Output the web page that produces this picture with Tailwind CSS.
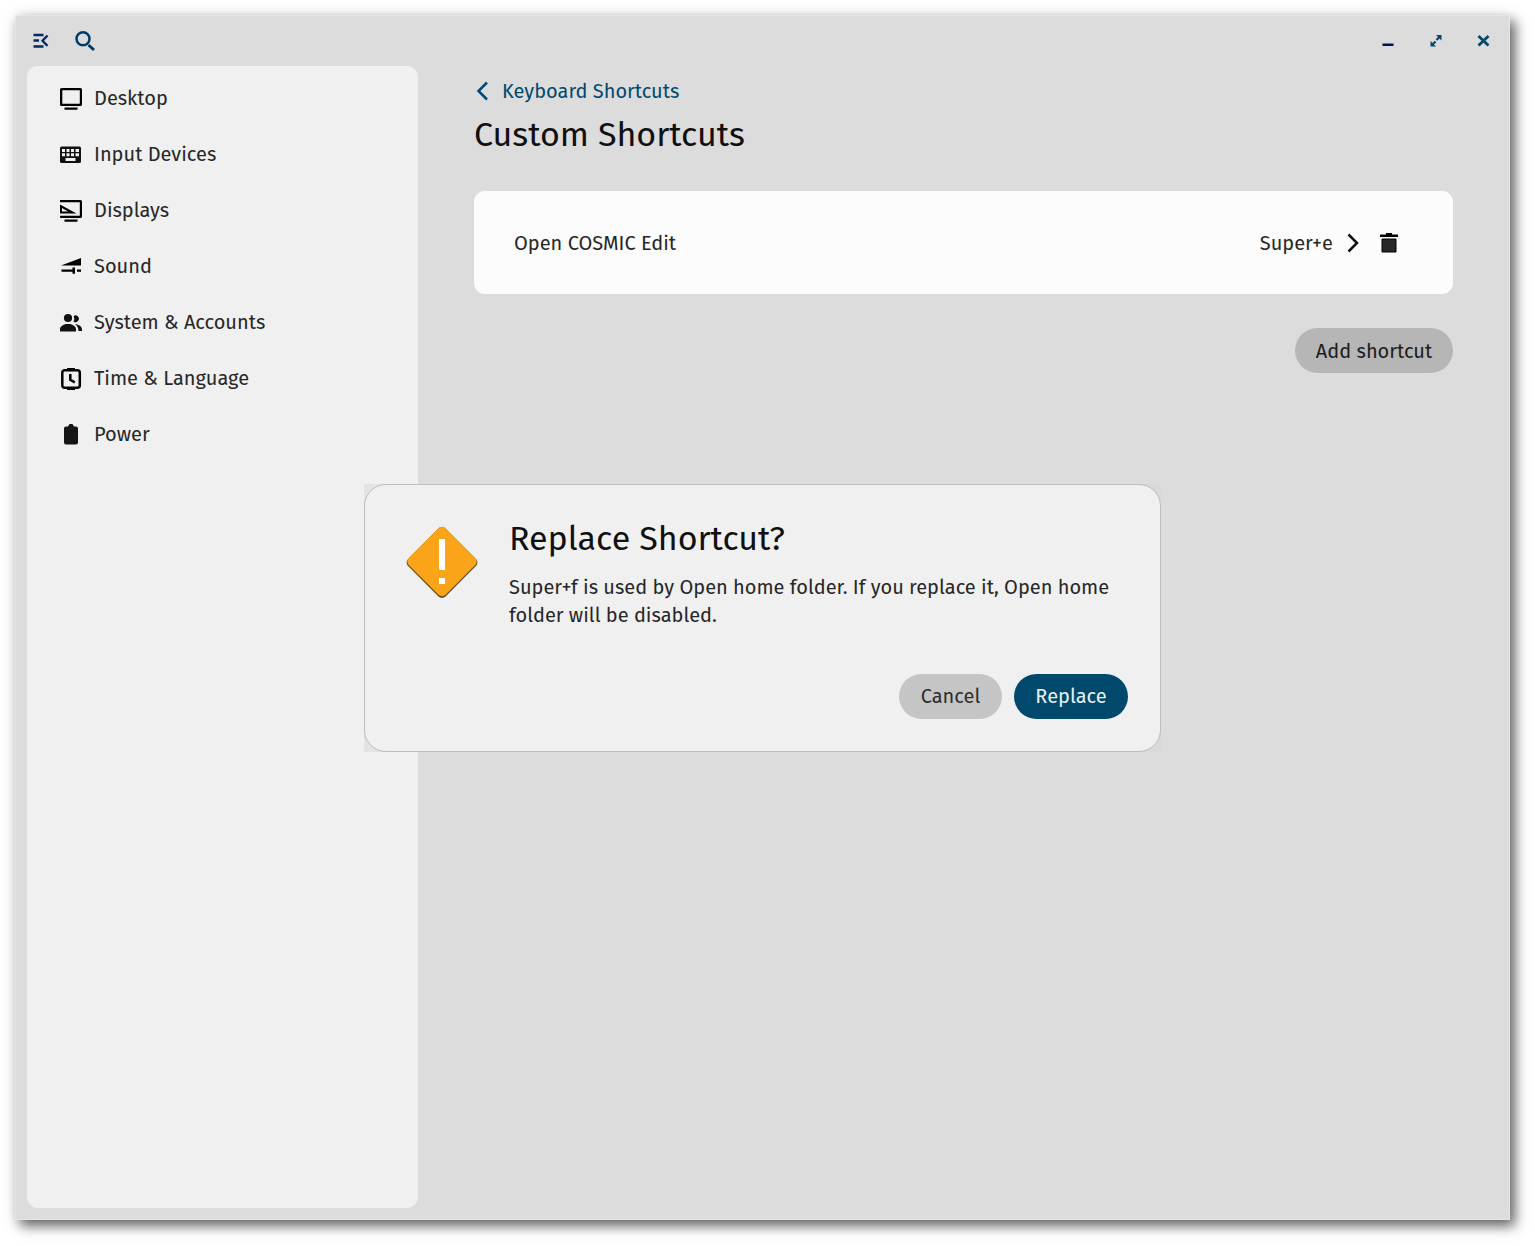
<!DOCTYPE html>
<html lang="en">
<head>
    <meta charset="UTF-8">
    <meta name="viewport" content="width=device-width, initial-scale=1.0">
    <title>Custom Shortcuts</title>
    <script src="https://cdn.jsdelivr.net/npm/@tailwindcss/browser@4"></script>
</head>
<body class="bg-white font-['Fira_Sans','Noto_Sans',sans-serif] text-[20px] leading-7 text-[#272727] min-h-screen flex pt-[15px] pr-[25px] pb-[26px] pl-[15px]">

    <!-- Window -->
    <div class="relative grow flex flex-col bg-[#dcdcdc] border border-[#e6e6e6] shadow-[5px_6px_12px_rgba(0,0,0,0.6),0_0_16px_rgba(0,0,0,0.08)]">

        <header class="h-[50px] shrink-0 flex items-center justify-between pl-3 pr-[13px] text-[#00496d]">
            <div class="flex items-center gap-5">
                <button aria-label="Toggle sidebar" class="w-6 h-6">
                    <svg class="w-6 h-6" viewBox="0 0 24 24" fill="none" stroke="#002a66" stroke-width="2.300"><path d="M5.500 6h10M5.500 11.500h5.500M5.500 17.500h10M19.500 6.500l-5 5.200 5 5.200"/></svg>
                </button>
                <button aria-label="Search" class="w-6 h-6">
                    <svg class="w-6 h-6" viewBox="0 0 24 24" fill="none" stroke="#003c6b" stroke-width="2.500"><circle cx="11" cy="9.800" r="6.500"/><path d="M16.500 16l5.500 5" stroke-width="3"/></svg>
                </button>
            </div>
            <div class="flex items-center gap-6">
                <button aria-label="Minimize" class="w-6 h-6">
                    <svg class="w-6 h-6" viewBox="0 0 24 24"><path d="M6.500 14.500h11V17h-11z" fill="#00115a"/></svg>
                </button>
                <button aria-label="Maximize" class="w-6 h-6">
                    <svg class="w-6 h-6" viewBox="0 0 24 24" fill="#00496d"><path d="M12 6h5.500v5.500l-2-2-2.300 2.300-1.500-1.500L14 8zM6.500 12v5.500H12l-2-2 2.300-2.300-1.500-1.500L8.500 14z"/></svg>
                </button>
                <button aria-label="Close" class="w-6 h-6">
                    <svg class="w-6 h-6" viewBox="0 0 24 24" fill="none" stroke="#00496d" stroke-width="2.800"><path d="M6.500 7l10 9.500M16.500 7l-10 9.500"/></svg>
                </button>
            </div>
        </header>

        <div class="grow flex pl-[11px] pb-[11px]">
            <!-- Sidebar -->
            <nav class="w-[391px] shrink-0 bg-[#f0f0f0] rounded-[11px] pt-1 px-2">
                <ul>
                    <li><a href="#" class="h-14 px-6 flex items-center gap-[11px]">
                        <svg class="w-6 h-6 mt-px" viewBox="0 0 24 24" fill="#000"><path fill-rule="evenodd" d="M2.500 1h19A1.500 1.500 0 0 1 23 2.500v15a1.500 1.500 0 0 1-1.500 1.500h-19A1.500 1.500 0 0 1 1 17.500v-15A1.500 1.500 0 0 1 2.500 1zM3.300 3.200v13.500h17.500V3.200zM5.500 20.500h13v2.300h-13z"/></svg>
                        Desktop</a></li>
                    <li><a href="#" class="h-14 px-6 flex items-center gap-[11px]">
                        <svg class="w-6 h-6 mt-px" viewBox="0 0 24 24" fill="#111"><path fill-rule="evenodd" d="M2.500 3.500h18A1.500 1.500 0 0 1 22 5v13.500a1.500 1.500 0 0 1-1.500 1.500h-18A1.500 1.500 0 0 1 1 18.500V5a1.500 1.500 0 0 1 1.500-1.500zM3 6v3h3V6zM7.500 6v3h3V6zM12 6v3h3V6zM16.500 6v3h3.500V6zM3 10.200v3h3v-3zM7.500 10.200v3h3v-3zM12 10.200v3h3v-3zM16.500 10.200v3h3.500v-3zM6.500 15v3h10v-3z"/></svg>
                        Input Devices</a></li>
                    <li><a href="#" class="h-14 px-6 flex items-center gap-[11px]">
                        <svg class="w-6 h-6 mt-px" viewBox="0 0 24 24" fill="#000"><path d="M1 1h20.500A1.500 1.500 0 0 1 23 2.500v15a1.500 1.500 0 0 1-1.500 1.500H2a1 1 0 0 1-1-1v-1.200h19.800V3.200H1zM5.500 20.500h13v2.300h-13z"/><path fill-rule="evenodd" d="M1 5.500L17.500 14.500H1zM3 9v3.500h6z"/></svg>
                        Displays</a></li>
                    <li><a href="#" class="h-14 px-6 flex items-center gap-[11px]">
                        <svg class="w-6 h-6 mt-px" viewBox="0 0 24 24" fill="#000"><path d="M22 3v7.500H2zM2.500 14.500h11v-2H16v6.300h-2.500v-2h-11zM18 14.500h4v2.300h-4z"/></svg>
                        Sound</a></li>
                    <li><a href="#" class="h-14 px-6 flex items-center gap-[11px]">
                        <svg class="w-6 h-6 mt-px" viewBox="0 0 24 24" fill="#111"><circle cx="9" cy="7" r="4.100"/><path d="M1 20.500v-2.200C1 15 5 13 9 13s8 2 8 5.300v2.200z"/><path d="M14.500 5.200a3.300 3.300 0 1 1 0 5.200c1-1.700 1-3.500 0-5.200zM16 13c4 .6 7 2.500 7 5.500V20h-3.500c0-3-1-5-3.500-7z"/></svg>
                        System &amp; Accounts</a></li>
                    <li><a href="#" class="h-14 px-6 flex items-center gap-[11px]">
                        <svg class="w-6 h-6 mt-px" viewBox="0 0 24 24" fill="none" stroke="#000" stroke-width="2.500"><rect x="3.300" y="3.300" width="17.500" height="17.500" rx="2.500"/><path d="M8 2.200h8M8 21.800h8"/><path d="M11.300 7v5.800l4.500 2.500"/></svg>
                        Time &amp; Language</a></li>
                    <li><a href="#" class="h-14 px-6 flex items-center gap-[11px]">
                        <svg class="w-6 h-6 mt-px" viewBox="0 0 24 24" fill="#151515"><path d="M10.500 1h3L15 3.500h2A2 2 0 0 1 19 5.500v14a2 2 0 0 1-2 2H7a2 2 0 0 1-2-2v-14a2 2 0 0 1 2-2h2z"/></svg>
                        Power</a></li>
                </ul>
            </nav>

            <!-- Content -->
            <main class="grow px-14 pt-[11px]">
                <a href="#" class="flex w-fit items-center gap-1 text-[#00496d]">
                    <svg class="w-6 h-6" viewBox="0 0 24 24" fill="none" stroke="#004a78" stroke-width="2.500"><path d="M13 3.500L4.500 12l8.500 8.500"/></svg>
                    Keyboard Shortcuts
                </a>
                <h1 class="text-[34px] leading-10 mt-[10px] text-[#101010]">Custom Shortcuts</h1>

                <div class="mt-9 h-[103px] bg-[#fcfcfc] rounded-[11px] flex items-center justify-between pl-10 pr-[52px]">
                    <span>Open COSMIC Edit</span>
                    <div class="flex items-center gap-3">
                        <button class="flex items-center gap-2">
                            Super+e
                            <svg class="w-6 h-6" viewBox="0 0 24 24" fill="none" stroke="#111" stroke-width="2.500"><path d="M7.500 3.500l8.500 8.500-8.500 8.500"/></svg>
                        </button>
                        <button aria-label="Delete shortcut" class="w-6 h-6">
                            <svg class="w-6 h-6" viewBox="0 0 24 24"><path d="M9 2h6v1.500h6V6H3V3.500h6z" fill="#000"/><path d="M5 8h14v13H5z" fill="#272727" stroke="#000"/></svg>
                        </button>
                    </div>
                </div>

                <div class="mt-[34px] flex justify-end">
                    <button class="h-[45px] w-[158px] rounded-full bg-[#b6b6b6] text-[#1c1c1c]">Add shortcut</button>
                </div>
            </main>
        </div>

        <!-- Replace dialog -->
        <div class="absolute inset-0 flex items-center justify-center pointer-events-none">
            <div class="bg-[#d6d6d6]/50 pointer-events-auto">
                <div role="alertdialog" aria-labelledby="dialogTitle" class="w-[797px] bg-[#f0f0f0] border border-[#bdbdbd] rounded-[22px] pt-[34px] pb-8 pl-10 pr-8">
                    <div class="flex gap-[30px]">
                        <svg class="w-[74px] h-[74px] mt-[6px] shrink-0" viewBox="0 0 74 74">
                            <rect x="10.500" y="11" width="53" height="53" rx="5" transform="rotate(45 37 37.500)" fill="#6b4a1c"/>
                            <rect x="11" y="10.500" width="52" height="52" rx="5" transform="rotate(45 37 36.500)" fill="#faa41a"/>
                            <path d="M34 14h6v31h-6zM34 53h6v6h-6z" fill="#fff"/>
                        </svg>
                        <div>
                            <h2 id="dialogTitle" class="text-[34px] leading-10 text-[#101010]">Replace Shortcut?</h2>
                            <p class="mt-[14px]">Super+f is used by Open home folder. If you replace it, Open home folder will be disabled.</p>
                        </div>
                    </div>
                    <div class="mt-[45px] flex justify-end gap-3">
                        <button class="h-[45px] w-[103px] rounded-full bg-[#c5c5c5] text-[#2e2e2e]">Cancel</button>
                        <button class="h-[45px] w-[114px] rounded-full bg-[#00496d] text-[#e8f0f4]">Replace</button>
                    </div>
                </div>
            </div>
        </div>
    </div>

</body>
</html>
